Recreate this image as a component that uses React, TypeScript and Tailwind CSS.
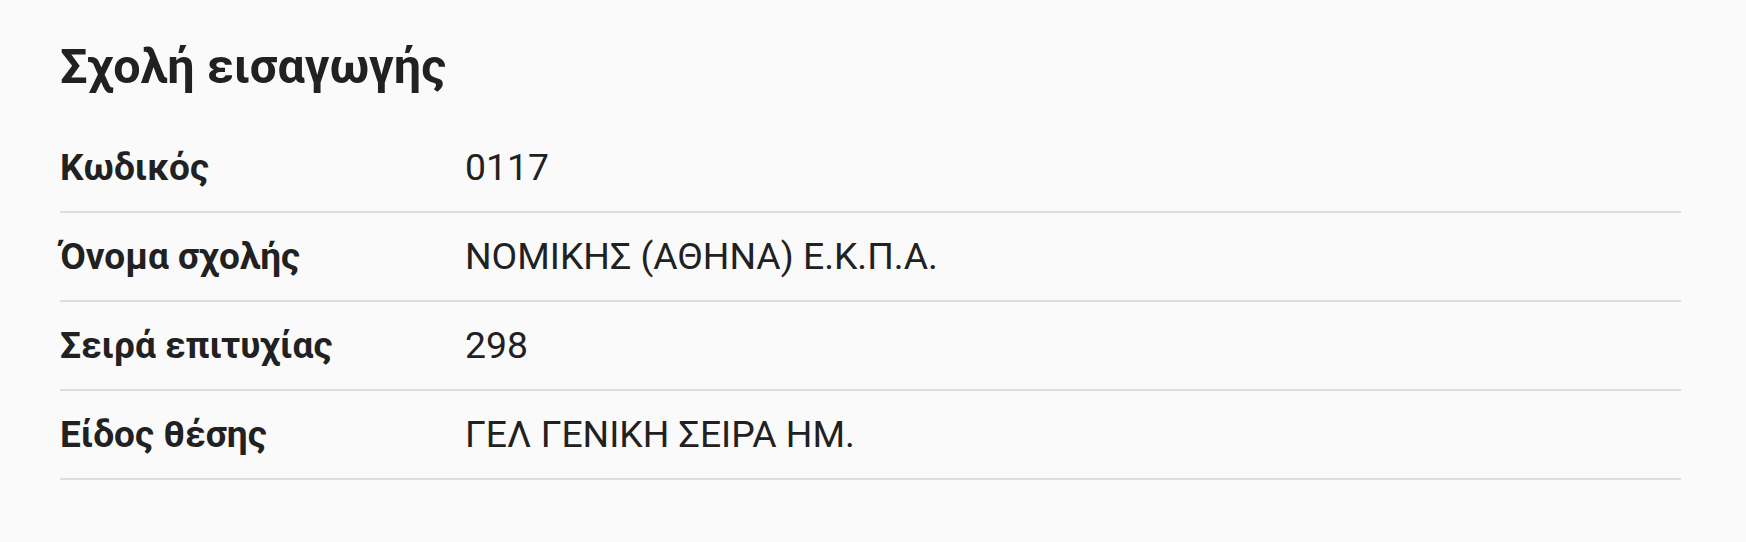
const rows = [
  { label: 'Κωδικός', value: '0117' },
  { label: 'Όνομα σχολής', value: 'ΝΟΜΙΚΗΣ (ΑΘΗΝΑ) Ε.Κ.Π.Α.' },
  { label: 'Σειρά επιτυχίας', value: '298' },
  { label: 'Είδος θέσης', value: 'ΓΕΛ ΓΕΝΙΚΗ ΣΕΙΡΑ ΗΜ.' },
];

export default function App() {
  return (
    <div className="min-h-[542px] w-full bg-[#fafafa] pl-[60px] pr-[65px] pt-[37px] font-['Roboto',sans-serif] text-[#212121]">
      {/* Section title */}
      <h1 className="text-[48.5px] font-bold leading-[59px]">Σχολή εισαγωγής</h1>

      {/* Detail rows */}
      <div className="mt-[28px]">
        {rows.map((row) => (
          <div
            key={row.label}
            className="flex h-[89px] items-center border-b-2 border-[#dddddd] text-[37px]"
          >
            <span className="w-[405px] shrink-0 font-bold">{row.label}</span>
            <span className="text-[37.3px] font-normal">{row.value}</span>
          </div>
        ))}
      </div>
    </div>
  );
}
